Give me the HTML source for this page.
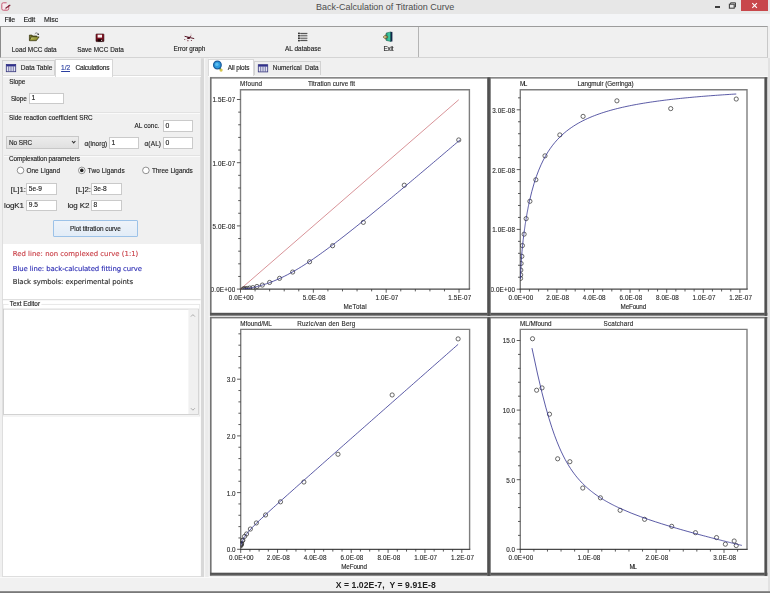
<!DOCTYPE html>
<html lang="en"><head><meta charset="utf-8"><title>Back-Calculation of Titration Curve</title>
<style>
html,body{margin:0;padding:0}
body{width:770px;height:593px;overflow:hidden;background:#f0f0f0;position:relative;font-family:"Liberation Sans",sans-serif}
#app div{position:absolute;box-sizing:border-box}
#app svg{position:absolute;left:0;top:0}
#app{position:absolute;left:0;top:0;width:770px;height:593px;filter:blur(0.42px)}
.t{position:absolute;white-space:pre;line-height:10px;-webkit-text-stroke:0.13px currentColor}
</style></head>
<body><div id="app">
<div style="left:0.00px;top:0.00px;width:770.00px;height:13.50px;background:#e7e7e7"></div>
<svg width="14" height="14" viewBox="0 0 14 14"><rect x="1.8" y="2.8" width="6.9" height="7.4" rx="1.5" fill="#f7eaee" stroke="#c65872" stroke-width="1"/><rect x="6.6" y="1.8" width="3.2" height="3.2" fill="#e7e7e7"/><path d="M10.3 5 L5.7 8.3" stroke="#7c2236" stroke-width="1.2"/><path d="M4.9 9 L6 8.6" stroke="#c65872" stroke-width="0.8"/></svg>
<span class="t" style='left:316.00px;top:1.78px;font-size:9px;color:#4c4c4c;letter-spacing:-0.011px;-webkit-text-stroke:0;'>Back-Calculation of Titration Curve</span>
<div style="left:714.70px;top:6.40px;width:5.20px;height:1.30px;background:#3c3c3c"></div>
<svg width="770" height="14" viewBox="0 0 770 14"><path d="M730.6 4.1 V2.8 H735.5 V7 H734.2" fill="none" stroke="#444" stroke-width="1"/><rect x="729.4" y="4.2" width="4.8" height="4" fill="#e7e7e7" stroke="#444" stroke-width="1.1"/></svg>
<div style="left:741.30px;top:0.00px;width:26.60px;height:10.70px;background:#c8474b"></div>
<svg width="770" height="14" viewBox="0 0 770 14"><path d="M752.3 3.2 L756.9 7.8 M756.9 3.2 L752.3 7.8" stroke="#fff" stroke-width="1.1"/></svg>
<div style="left:0.00px;top:13.50px;width:770.00px;height:12.30px;background:#f4f5f7"></div>
<span class="t" style='left:4.40px;top:14.97px;font-size:7px;color:#1a1a1a;letter-spacing:-0.194px;'>File</span>
<span class="t" style='left:23.50px;top:14.97px;font-size:7px;color:#1a1a1a;letter-spacing:-0.154px;'>Edit</span>
<span class="t" style='left:44.00px;top:14.97px;font-size:7px;color:#1a1a1a;letter-spacing:-0.064px;'>Misc</span>
<div style="left:0.30px;top:25.70px;width:768.00px;height:32.40px;background:#f0f0f0;border-top:1px solid #9c9c9c;border-left:1.2px solid #8a8a8a;border-bottom:1px solid #d4d4d4;border-right:1px solid #c8c8c8"></div>
<div style="left:417.60px;top:26.50px;width:1.00px;height:30.50px;background:#b4b4b4"></div>
<span class="t" style='left:11.80px;top:45.18px;font-size:6.4px;color:#222;letter-spacing:0.003px;'>Load MCC data</span>
<span class="t" style='left:77.20px;top:45.18px;font-size:6.4px;color:#222;letter-spacing:0.036px;'>Save MCC Data</span>
<span class="t" style='left:173.60px;top:44.18px;font-size:6.4px;color:#222;letter-spacing:-0.053px;'>Error graph</span>
<span class="t" style='left:285.00px;top:44.18px;font-size:6.4px;color:#222;letter-spacing:0.044px;'>AL database</span>
<span class="t" style='left:383.60px;top:44.18px;font-size:6.4px;color:#222;letter-spacing:-0.252px;'>Exit</span>
<svg width="770" height="60" viewBox="0 0 770 60"><defs>
<linearGradient id="fg" x1="0" y1="0" x2="1" y2="1"><stop offset="0" stop-color="#e4eaa0"/><stop offset="0.45" stop-color="#a4a440"/><stop offset="1" stop-color="#6e6c26"/></linearGradient>
<linearGradient id="sg" x1="0" y1="0" x2="0" y2="1"><stop offset="0" stop-color="#8c1626"/><stop offset="0.6" stop-color="#7a1020"/><stop offset="1" stop-color="#3a060c"/></linearGradient>
<linearGradient id="dg" x1="0" y1="0" x2="1" y2="0"><stop offset="0" stop-color="#1a9470"/><stop offset="0.6" stop-color="#44cfa6"/><stop offset="1" stop-color="#1e9c7c"/></linearGradient>
</defs>
<!-- open folder -->
<path d="M29.4 40.4 V35.1 H32 L32.8 36 H36.8 V37.2" fill="#77752a" stroke="#35340f" stroke-width="0.7"/>
<path d="M29.4 40.7 L31.2 36.9 H39.1 L36.3 40.7 Z" fill="url(#fg)" stroke="#35340f" stroke-width="0.7"/>
<path d="M34.8 33.9 C35.8 32.6 37.4 32.6 38.1 33.9" fill="none" stroke="#444" stroke-width="0.7"/>
<path d="M37 34.9 H38.9 V33.2 Z" fill="#222"/>
<!-- save -->
<rect x="96" y="34" width="7.9" height="7.6" rx="0.5" fill="url(#sg)" stroke="#2c0408" stroke-width="0.6"/>
<rect x="97.6" y="34.7" width="4.4" height="2.9" fill="#fbf4f4"/>
<rect x="97.8" y="39.2" width="4.2" height="2.2" fill="#1a0204"/>
<rect x="101.2" y="39.8" width="0.9" height="1.2" fill="#e8e0e0"/>
<!-- error graph -->
<path d="M184.6 36.3 L194.2 38.6" stroke="#5a1a2a" stroke-width="1" fill="none"/>
<path d="M186.8 39.2 L191.4 35.6" stroke="#8a3a4a" stroke-width="0.6" fill="none"/>
<ellipse cx="188.6" cy="38" rx="1.5" ry="1" fill="#4a0e1e"/>
<g fill="#6a2636"><circle cx="184.8" cy="39.5" r="0.55"/><circle cx="187.9" cy="40.7" r="0.6"/><circle cx="191.4" cy="40.5" r="0.6"/><circle cx="190.6" cy="36.2" r="0.5"/></g>
<circle cx="191" cy="33.9" r="0.5" fill="#c8a8b0"/>
<!-- list -->
<g stroke="#3c3c3c" stroke-width="0.95"><path d="M300.2 33.4 H307.4 M300.2 35.8 H307.4 M300.2 38.2 H307.4 M300.2 40.6 H307.4"/></g>
<g stroke="#c4c4c4" stroke-width="0.7"><path d="M300.6 34.6 H307 M300.6 37 H307 M300.6 39.4 H307"/></g>
<g fill="#222"><rect x="298.1" y="32.6" width="1.7" height="1.6"/><rect x="298.1" y="35" width="1.7" height="1.6"/><rect x="298.1" y="37.4" width="1.7" height="1.6"/><rect x="298.1" y="39.8" width="1.7" height="1.6"/></g>
<!-- exit -->
<path d="M386.2 33 L391 31.9 V41.5 L386.2 40.4 Z" fill="url(#dg)" stroke="#0c5040" stroke-width="0.5"/>
<rect x="390.6" y="31.9" width="1.8" height="9.6" fill="#13284a"/>
<path d="M383.1 37 L385.7 34.8 V36.2 H387.6 V37.8 H385.7 V39.2 Z" fill="#e6d68c" stroke="#4a3014" stroke-width="0.6"/>
</svg>
<div style="left:1.60px;top:75.00px;width:200.40px;height:502.40px;background:#fff;border:1px solid #dedede"></div>
<div style="left:2.80px;top:76.60px;width:198.00px;height:167.00px;background:#f0f0f0;border-right:1px solid #e0e0e0"></div>
<div style="left:1.80px;top:60.00px;width:53.40px;height:15.40px;background:#efefef;border:1px solid #d2d2d2;border-bottom:none"></div>
<div style="left:55.00px;top:58.60px;width:58.20px;height:18.00px;background:#fff;border:1px solid #d6d6d6;border-bottom:none"></div>
<svg width="120" height="80" viewBox="0 0 120 80">
<rect x="6.3" y="64.5" width="9.4" height="7.2" fill="#e4e6f0" stroke="#34347c" stroke-width="0.8"/>
<rect x="6.3" y="64.5" width="9.4" height="1.9" fill="#30308c"/>
<path d="M8.7 66.2 V71.5 M11 66.2 V71.5 M13.3 66.2 V71.5" stroke="#44448c" stroke-width="0.7"/>
</svg>
<span class="t" style='left:20.80px;top:63.31px;font-size:6.6px;color:#222;letter-spacing:0.022px;'>Data Table</span>
<span class="t" style='left:61.10px;top:62.71px;font-size:6.6px;color:#2a3ea0;letter-spacing:-0.086px;text-decoration:underline;'>1/2</span>
<span class="t" style='left:75.50px;top:62.71px;font-size:6.6px;color:#222;letter-spacing:-0.175px;'>Calculations</span>
<span class="t" style='left:9.30px;top:76.78px;font-size:6.4px;color:#222;letter-spacing:-0.090px;'>Slope</span>
<span class="t" style='left:11.00px;top:93.78px;font-size:6.4px;color:#222;letter-spacing:-0.165px;'>Slope</span>
<div style="left:29.00px;top:92.50px;width:35.00px;height:11.90px;background:#fff;border:1px solid #cacaca"></div>
<span class="t" style='left:31.40px;top:93.19px;font-size:6.8px;color:#222;'>1</span>
<div style="left:3.80px;top:112.00px;width:196.00px;height:1.00px;background:#e2e2e2"></div>
<div style="left:3.80px;top:113.00px;width:196.00px;height:1.00px;background:#fafafa"></div>
<span class="t" style='left:9.00px;top:112.88px;font-size:6.4px;color:#222;letter-spacing:0.024px;'>Side reaction coefficient SRC</span>
<span class="t" style='left:134.40px;top:121.48px;font-size:6.4px;color:#222;letter-spacing:0.066px;'>AL conc.</span>
<div style="left:163.00px;top:120.40px;width:29.80px;height:12.00px;background:#fff;border:1px solid #cacaca"></div>
<span class="t" style='left:165.40px;top:121.14px;font-size:6.8px;color:#222;'>0</span>
<div style="left:6.00px;top:136.40px;width:72.50px;height:12.20px;background:linear-gradient(#ececec,#e0e0e0);border:1px solid #c8c8c8"></div>
<span class="t" style='left:9.00px;top:138.18px;font-size:6.4px;color:#222;letter-spacing:-0.051px;'>No SRC</span>
<svg width="100" height="160" viewBox="0 0 100 160"><path d="M72 141 L73.7 142.9 L75.4 141" fill="none" stroke="#333" stroke-width="1.1"/></svg>
<span class="t" style='left:84.50px;top:138.78px;font-size:6.4px;color:#222;letter-spacing:0.075px;'>α(inorg)</span>
<div style="left:109.00px;top:137.20px;width:29.50px;height:12.20px;background:#fff;border:1px solid #cacaca"></div>
<span class="t" style='left:111.40px;top:138.04px;font-size:6.8px;color:#222;'>1</span>
<span class="t" style='left:144.50px;top:138.78px;font-size:6.4px;color:#222;letter-spacing:0.180px;'>α(AL)</span>
<div style="left:163.00px;top:137.20px;width:29.80px;height:12.20px;background:#fff;border:1px solid #cacaca"></div>
<span class="t" style='left:165.40px;top:138.04px;font-size:6.8px;color:#222;'>0</span>
<div style="left:3.80px;top:154.60px;width:196.00px;height:1.00px;background:#e2e2e2"></div>
<div style="left:3.80px;top:155.60px;width:196.00px;height:1.00px;background:#fafafa"></div>
<span class="t" style='left:9.00px;top:154.08px;font-size:6.4px;color:#222;letter-spacing:-0.099px;'>Complexation parameters</span>
<svg width="210" height="200" viewBox="0 0 210 200"><circle cx="20.5" cy="170.4" r="3.3" fill="#fff" stroke="#6e6e6e" stroke-width="0.75"/></svg>
<svg width="210" height="200" viewBox="0 0 210 200"><circle cx="81.8" cy="170.4" r="3.3" fill="#fff" stroke="#6e6e6e" stroke-width="0.75"/><circle cx="81.8" cy="170.4" r="1.8" fill="#222"/></svg>
<svg width="210" height="200" viewBox="0 0 210 200"><circle cx="145.9" cy="170.4" r="3.3" fill="#fff" stroke="#6e6e6e" stroke-width="0.75"/></svg>
<span class="t" style='left:26.50px;top:165.58px;font-size:6.4px;color:#222;letter-spacing:0.050px;'>One Ligand</span>
<span class="t" style='left:87.80px;top:165.58px;font-size:6.4px;color:#222;letter-spacing:0.091px;'>Two Ligands</span>
<span class="t" style='left:151.90px;top:165.58px;font-size:6.4px;color:#222;letter-spacing:0.003px;'>Three Ligands</span>
<span class="t" style='left:10.80px;top:185.30px;font-size:7.8px;color:#222;letter-spacing:0.007px;'>[L]1:</span>
<div style="left:26.40px;top:182.80px;width:30.40px;height:12.00px;background:#fff;border:1px solid #cacaca"></div>
<span class="t" style='left:28.80px;top:183.61px;font-size:6.6px;color:#222;'>5e-9</span>
<span class="t" style='left:75.80px;top:185.30px;font-size:7.8px;color:#222;letter-spacing:0.007px;'>[L]2:</span>
<div style="left:91.20px;top:182.80px;width:30.40px;height:12.00px;background:#fff;border:1px solid #cacaca"></div>
<span class="t" style='left:93.60px;top:183.61px;font-size:6.6px;color:#222;'>3e-8</span>
<span class="t" style='left:4.10px;top:201.03px;font-size:8.0px;color:#222;letter-spacing:-0.142px;'>logK1</span>
<div style="left:26.40px;top:199.60px;width:30.40px;height:11.60px;background:#fff;border:1px solid #cacaca"></div>
<span class="t" style='left:28.80px;top:200.21px;font-size:6.6px;color:#222;'>9.5</span>
<span class="t" style='left:67.40px;top:201.03px;font-size:8.0px;color:#222;letter-spacing:-0.138px;'>log K2</span>
<div style="left:91.20px;top:199.60px;width:30.40px;height:11.60px;background:#fff;border:1px solid #cacaca"></div>
<span class="t" style='left:93.60px;top:200.21px;font-size:6.6px;color:#222;'>8</span>
<div style="left:52.80px;top:220.40px;width:85.60px;height:16.40px;background:linear-gradient(#eef3f9,#e2ecf7);border:1px solid #9cc2e8;border-radius:1px"></div>
<span class="t" style='left:70.00px;top:224.18px;font-size:6.4px;color:#222;letter-spacing:-0.019px;'>Plot titration curve</span>
<div style="left:2.80px;top:243.60px;width:198.00px;height:56.00px;background:#fff"></div>
<span class="t" style='left:12.80px;top:249.31px;font-size:6.9px;color:#c83c44;font-family:"DejaVu Sans", "Liberation Sans", sans-serif;letter-spacing:0.011px;'>Red line: non complexed curve (1:1)</span>
<span class="t" style='left:12.80px;top:264.11px;font-size:6.9px;color:#2c2cb4;font-family:"DejaVu Sans", "Liberation Sans", sans-serif;letter-spacing:-0.094px;'>Blue line: back-calculated fitting curve</span>
<span class="t" style='left:12.80px;top:277.21px;font-size:6.9px;color:#2a2a2a;font-family:"DejaVu Sans", "Liberation Sans", sans-serif;letter-spacing:-0.082px;'>Black symbols: experimental points</span>
<svg width="215" height="593" viewBox="0 0 215 593"><rect x="2.60" y="299.20" width="198.00" height="1.00" fill="#d6d6d6"/><rect x="3.1" y="304.4" width="196.6" height="111.6" fill="none" stroke="#e6e6e6" stroke-width="0.9"/><rect x="8.60" y="303.00" width="32.80" height="3.00" fill="#fff"/><rect x="3.5" y="309.1" width="194.9" height="105.4" fill="#fff" stroke="#cecece" stroke-width="0.9"/><rect x="188.40" y="309.60" width="9.60" height="104.40" fill="#f0f0f0"/><path d="M190.9 316.6 L192.9 314.6 L194.9 316.6 M190.9 408.2 L192.9 410.2 L194.9 408.2" fill="none" stroke="#a4a4a4" stroke-width="0.9"/><rect x="200.90" y="58.40" width="3.10" height="518.80" fill="#d8d8d8"/><rect x="204.00" y="58.40" width="1.30" height="518.80" fill="#f6f6f6"/><rect x="205.30" y="58.40" width="3.50" height="518.80" fill="#ebebeb"/><rect x="208.80" y="58.40" width="1.30" height="518.80" fill="#f8f8f8"/></svg>
<span class="t" style='left:9.70px;top:299.18px;font-size:6.4px;color:#222;letter-spacing:0.020px;'>Text Editor</span>
<div style="left:254.00px;top:60.60px;width:66.60px;height:14.60px;background:#efefef;border:1px solid #d2d2d2;border-bottom:none"></div>
<div style="left:208.20px;top:58.80px;width:46.00px;height:18.00px;background:#fff;border:1px solid #dadada;border-bottom:none"></div>
<div style="left:208.20px;top:75.60px;width:561.00px;height:1.20px;background:#fafafa"></div>
<svg width="330" height="80" viewBox="0 0 330 80">
<circle cx="221.1" cy="70.1" r="1.6" fill="#d6c64e"/>
<circle cx="219.9" cy="68.6" r="1" fill="#3a7a4a"/>
<circle cx="217.4" cy="65" r="3.8" fill="#2c9ce0" stroke="#1c5c9c" stroke-width="1.3"/>
<circle cx="216.9" cy="64.4" r="1.7" fill="#5cbcf0"/>
<rect x="258.3" y="64.7" width="9.4" height="7.2" fill="#e4e6f0" stroke="#34347c" stroke-width="0.8"/>
<rect x="258.3" y="64.7" width="9.4" height="1.9" fill="#30308c"/>
<path d="M260.7 66.4 V71.7 M263 66.4 V71.7 M265.3 66.4 V71.7" stroke="#44448c" stroke-width="0.7"/>
</svg>
<span class="t" style='left:227.70px;top:62.58px;font-size:6.4px;color:#222;letter-spacing:-0.074px;'>All plots</span>
<span class="t" style='left:272.80px;top:63.38px;font-size:6.4px;color:#222;letter-spacing:-0.002px;'>Numerical  Data</span>
<svg width="770" height="593" viewBox="0 0 770 593"><defs><linearGradient id="gh" x1="0" y1="0" x2="0" y2="1"><stop offset="0" stop-color="#4c4c4c"/><stop offset="0.55" stop-color="#5a5a5a"/><stop offset="1" stop-color="#8e8e8e"/></linearGradient><linearGradient id="gv" x1="0" y1="0" x2="1" y2="0"><stop offset="0" stop-color="#6c6c6c"/><stop offset="0.3" stop-color="#4e4e4e"/><stop offset="0.8" stop-color="#585858"/><stop offset="1" stop-color="#808080"/></linearGradient></defs>
<rect x="210.10" y="77.30" width="557.30" height="498.60" fill="#fff"/>
<rect x="210.10" y="315.90" width="557.30" height="1.00" fill="#ececec"/>
<rect x="210.10" y="77.10" width="557.30" height="1.50" fill="#7a7a7a"/>
<rect x="210.10" y="316.90" width="557.30" height="1.50" fill="#787878"/>
<rect x="209.90" y="77.30" width="1.70" height="238.60" fill="#747474"/>
<rect x="209.90" y="316.90" width="1.70" height="259.00" fill="#747474"/>
<rect x="210.10" y="312.80" width="557.30" height="3.10" fill="url(#gh)"/>
<rect x="210.10" y="572.70" width="557.30" height="3.20" fill="url(#gh)"/>
<rect x="487.10" y="77.30" width="3.70" height="238.60" fill="url(#gv)"/>
<rect x="487.10" y="317.20" width="3.70" height="258.70" fill="url(#gv)"/>
<rect x="764.30" y="77.30" width="3.10" height="238.60" fill="url(#gv)"/>
<rect x="764.30" y="317.20" width="3.10" height="258.70" fill="url(#gv)"/>
</svg>
<svg width="770" height="593" viewBox="0 0 770 593">
<path d="M240.50 289.10 V89.70 H469.40 V289.10" fill="none" stroke="#7e7e7e" stroke-width="1.4"/>
<path d="M239.80 289.10 H470.10" fill="none" stroke="#484848" stroke-width="1.25"/>
<path d="M240.50 289.10v3.6M255.07 289.10v2.3M269.64 289.10v2.3M284.21 289.10v2.3M298.78 289.10v2.3M313.35 289.10v3.6M327.92 289.10v2.3M342.49 289.10v2.3M357.06 289.10v2.3M371.63 289.10v2.3M386.20 289.10v3.6M400.77 289.10v2.3M415.34 289.10v2.3M429.91 289.10v2.3M444.48 289.10v2.3M459.05 289.10v3.6M240.50 289.10h-3.6M240.50 276.46h-2.3M240.50 263.82h-2.3M240.50 251.18h-2.3M240.50 238.54h-2.3M240.50 225.90h-3.6M240.50 213.26h-2.3M240.50 200.62h-2.3M240.50 187.98h-2.3M240.50 175.34h-2.3M240.50 162.70h-3.6M240.50 150.06h-2.3M240.50 137.42h-2.3M240.50 124.78h-2.3M240.50 112.14h-2.3M240.50 99.50h-3.6" fill="none" stroke="#333" stroke-width="0.8"/>
<path d="M240.50 289.10 L458.76 99.75" stroke="#c25860" stroke-width="0.65" fill="none"/>
<clipPath id="cp1"><rect x="240.30" y="89.70" width="229.10" height="199.60"/></clipPath><g clip-path="url(#cp1)">
<circle cx="243.30" cy="288.95" r="2.1" fill="none" stroke="#303030" stroke-width="0.72"/>
<circle cx="244.30" cy="288.83" r="2.1" fill="none" stroke="#303030" stroke-width="0.72"/>
<circle cx="245.56" cy="288.75" r="2.1" fill="none" stroke="#303030" stroke-width="0.72"/>
<circle cx="247.41" cy="288.54" r="2.1" fill="none" stroke="#303030" stroke-width="0.72"/>
<circle cx="249.75" cy="288.03" r="2.1" fill="none" stroke="#303030" stroke-width="0.72"/>
<circle cx="252.83" cy="287.63" r="2.1" fill="none" stroke="#303030" stroke-width="0.72"/>
<circle cx="256.95" cy="286.46" r="2.1" fill="none" stroke="#303030" stroke-width="0.72"/>
<circle cx="262.34" cy="285.07" r="2.1" fill="none" stroke="#303030" stroke-width="0.72"/>
<circle cx="269.57" cy="282.46" r="2.1" fill="none" stroke="#303030" stroke-width="0.72"/>
<circle cx="279.55" cy="278.36" r="2.1" fill="none" stroke="#303030" stroke-width="0.72"/>
<circle cx="292.66" cy="272.04" r="2.1" fill="none" stroke="#303030" stroke-width="0.72"/>
<circle cx="309.56" cy="261.80" r="2.1" fill="none" stroke="#303030" stroke-width="0.72"/>
<circle cx="332.58" cy="245.74" r="2.1" fill="none" stroke="#303030" stroke-width="0.72"/>
<circle cx="363.33" cy="222.36" r="2.1" fill="none" stroke="#303030" stroke-width="0.72"/>
<circle cx="404.27" cy="185.20" r="2.1" fill="none" stroke="#303030" stroke-width="0.72"/>
<circle cx="458.76" cy="139.95" r="2.1" fill="none" stroke="#303030" stroke-width="0.72"/>
<path d="M243.18 288.95 L244.50 288.85 L245.57 288.74 L246.50 288.64 L247.32 288.53 L248.06 288.43 L248.74 288.32 L249.38 288.22 L249.99 288.11 L250.57 288.01 L251.12 287.90 L251.65 287.80 L252.16 287.69 L252.66 287.59 L253.15 287.49 L253.62 287.38 L254.09 287.28 L254.54 287.17 L254.99 287.07 L255.42 286.96 L255.85 286.86 L256.27 286.75 L256.69 286.65 L257.10 286.54 L257.50 286.44 L257.90 286.34 L258.29 286.23 L258.67 286.13 L259.06 286.02 L259.43 285.92 L259.81 285.81 L260.18 285.71 L260.54 285.60 L260.90 285.50 L261.26 285.39 L261.61 285.29 L261.96 285.19 L262.31 285.08 L262.65 284.98 L262.99 284.87 L263.32 284.77 L263.66 284.66 L263.99 284.56 L264.31 284.45 L264.64 284.35 L264.96 284.24 L265.28 284.14 L265.60 284.03 L265.91 283.93 L266.22 283.83 L266.53 283.72 L266.84 283.62 L267.14 283.51 L267.44 283.41 L267.74 283.30 L268.04 283.20 L268.33 283.09 L268.63 282.99 L268.92 282.88 L269.21 282.78 L273.41 281.18 L277.27 279.57 L280.84 277.97 L284.19 276.36 L287.36 274.76 L290.38 273.15 L293.27 271.55 L296.06 269.94 L298.75 268.34 L301.37 266.73 L303.92 265.13 L306.41 263.52 L308.85 261.92 L311.24 260.31 L313.60 258.71 L315.91 257.10 L318.19 255.50 L320.45 253.89 L322.68 252.29 L324.88 250.68 L327.06 249.08 L329.23 247.47 L331.37 245.87 L333.50 244.26 L335.61 242.66 L337.71 241.05 L339.80 239.45 L341.87 237.84 L343.94 236.24 L345.99 234.63 L348.03 233.03 L350.07 231.42 L352.10 229.82 L354.11 228.21 L356.13 226.61 L358.13 225.01 L360.13 223.40 L362.12 221.80 L364.11 220.19 L366.09 218.59 L368.07 216.98 L370.04 215.38 L372.01 213.77 L373.97 212.17 L375.93 210.56 L377.88 208.96 L379.84 207.35 L381.78 205.75 L383.73 204.14 L385.67 202.54 L387.61 200.93 L389.55 199.33 L391.48 197.72 L393.41 196.12 L395.34 194.51 L397.27 192.91 L399.19 191.30 L401.11 189.70 L403.03 188.09 L404.95 186.49 L406.87 184.88 L408.78 183.28 L410.70 181.67 L412.61 180.07 L414.52 178.46 L416.42 176.86 L418.33 175.25 L420.23 173.65 L422.14 172.05 L424.04 170.44 L425.94 168.84 L427.84 167.23 L429.74 165.63 L431.64 164.02 L433.53 162.42 L435.43 160.81 L437.32 159.21 L439.22 157.60 L441.11 156.00 L443.00 154.39 L444.89 152.79 L446.78 151.18 L448.67 149.58 L450.56 147.97 L452.45 146.37 L454.33 144.76 L456.22 143.16 L458.10 141.55 L459.99 139.95" fill="none" stroke="#2c2c8c" stroke-width="0.78"/>
</g></svg>
<span class="t" style='left:240.10px;top:79.12px;font-size:6.3px;color:#2c2c2c;letter-spacing:0.197px;'>Mfound</span>
<span class="t" style='left:307.90px;top:79.12px;font-size:6.3px;color:#2c2c2c;letter-spacing:0.049px;'>Titration curve fit</span>
<span class="t" style='left:343.40px;top:301.52px;font-size:6.3px;color:#2c2c2c;letter-spacing:0.206px;'>MeTotal</span>
<span class="t" style='left:228.80px;top:293.12px;font-size:6.3px;color:#2c2c2c;letter-spacing:0.160px;'>0.0E+00</span>
<span class="t" style='left:302.65px;top:293.12px;font-size:6.3px;color:#2c2c2c;letter-spacing:0.123px;'>5.0E-08</span>
<span class="t" style='left:375.50px;top:293.12px;font-size:6.3px;color:#2c2c2c;letter-spacing:0.123px;'>1.0E-07</span>
<span class="t" style='left:448.35px;top:293.12px;font-size:6.3px;color:#2c2c2c;letter-spacing:0.123px;'>1.5E-07</span>
<span class="t" style='left:210.60px;top:285.02px;font-size:6.3px;color:#2c2c2c;letter-spacing:0.160px;clip-path:inset(0 0 0 0.80px);'>0.0E+00</span>
<span class="t" style='left:212.40px;top:221.82px;font-size:6.3px;color:#2c2c2c;letter-spacing:0.123px;'>5.0E-08</span>
<span class="t" style='left:212.40px;top:158.62px;font-size:6.3px;color:#2c2c2c;letter-spacing:0.123px;'>1.0E-07</span>
<span class="t" style='left:212.40px;top:95.42px;font-size:6.3px;color:#2c2c2c;letter-spacing:0.123px;'>1.5E-07</span>
<svg width="770" height="593" viewBox="0 0 770 593">
<path d="M520.30 289.20 V89.70 H747.00 V289.20" fill="none" stroke="#7e7e7e" stroke-width="1.4"/>
<path d="M519.60 289.20 H747.70" fill="none" stroke="#484848" stroke-width="1.25"/>
<path d="M520.30 289.20v3.6M529.45 289.20v2.3M538.60 289.20v2.3M547.75 289.20v2.3M556.90 289.20v3.6M566.05 289.20v2.3M575.20 289.20v2.3M584.35 289.20v2.3M593.50 289.20v3.6M602.65 289.20v2.3M611.80 289.20v2.3M620.95 289.20v2.3M630.10 289.20v3.6M639.25 289.20v2.3M648.40 289.20v2.3M657.55 289.20v2.3M666.70 289.20v3.6M675.85 289.20v2.3M685.00 289.20v2.3M694.15 289.20v2.3M703.30 289.20v3.6M712.45 289.20v2.3M721.60 289.20v2.3M730.75 289.20v2.3M739.90 289.20v3.6M520.30 289.20h-3.6M520.30 277.24h-2.3M520.30 265.28h-2.3M520.30 253.32h-2.3M520.30 241.36h-2.3M520.30 229.40h-3.6M520.30 217.44h-2.3M520.30 205.48h-2.3M520.30 193.52h-2.3M520.30 181.56h-2.3M520.30 169.60h-3.6M520.30 157.64h-2.3M520.30 145.68h-2.3M520.30 133.72h-2.3M520.30 121.76h-2.3M520.30 109.80h-3.6M520.30 97.84h-2.3" fill="none" stroke="#333" stroke-width="0.8"/>

<clipPath id="cp2"><rect x="520.10" y="89.70" width="226.90" height="199.70"/></clipPath><g clip-path="url(#cp2)">
<circle cx="520.52" cy="278.44" r="2.1" fill="none" stroke="#303030" stroke-width="0.72"/>
<circle cx="520.68" cy="274.85" r="2.1" fill="none" stroke="#303030" stroke-width="0.72"/>
<circle cx="520.81" cy="270.06" r="2.1" fill="none" stroke="#303030" stroke-width="0.72"/>
<circle cx="521.11" cy="263.49" r="2.1" fill="none" stroke="#303030" stroke-width="0.72"/>
<circle cx="521.85" cy="256.31" r="2.1" fill="none" stroke="#303030" stroke-width="0.72"/>
<circle cx="522.42" cy="245.55" r="2.1" fill="none" stroke="#303030" stroke-width="0.72"/>
<circle cx="524.12" cy="234.18" r="2.1" fill="none" stroke="#303030" stroke-width="0.72"/>
<circle cx="526.14" cy="218.64" r="2.1" fill="none" stroke="#303030" stroke-width="0.72"/>
<circle cx="529.91" cy="201.29" r="2.1" fill="none" stroke="#303030" stroke-width="0.72"/>
<circle cx="535.85" cy="179.77" r="2.1" fill="none" stroke="#303030" stroke-width="0.72"/>
<circle cx="545.00" cy="155.85" r="2.1" fill="none" stroke="#303030" stroke-width="0.72"/>
<circle cx="559.83" cy="134.92" r="2.1" fill="none" stroke="#303030" stroke-width="0.72"/>
<circle cx="583.07" cy="116.38" r="2.1" fill="none" stroke="#303030" stroke-width="0.72"/>
<circle cx="616.92" cy="100.83" r="2.1" fill="none" stroke="#303030" stroke-width="0.72"/>
<circle cx="670.73" cy="108.60" r="2.1" fill="none" stroke="#303030" stroke-width="0.72"/>
<circle cx="736.24" cy="99.04" r="2.1" fill="none" stroke="#303030" stroke-width="0.72"/>
<path d="M520.52 278.91 L520.67 274.01 L520.82 270.08 L520.97 266.78 L521.12 263.92 L521.27 261.37 L521.43 259.05 L521.58 256.91 L521.73 254.93 L521.88 253.05 L522.03 251.28 L522.18 249.59 L522.33 247.97 L522.49 246.42 L522.64 244.92 L522.79 243.46 L522.94 242.06 L523.09 240.69 L523.24 239.36 L523.39 238.06 L523.55 236.80 L523.70 235.56 L523.85 234.36 L524.00 233.17 L524.15 232.02 L524.30 230.88 L524.45 229.77 L524.61 228.67 L524.76 227.60 L524.91 226.55 L525.06 225.51 L525.21 224.49 L525.36 223.49 L525.51 222.51 L525.67 221.54 L525.82 220.58 L525.97 219.65 L526.12 218.72 L526.27 217.81 L526.42 216.91 L526.57 216.03 L526.72 215.15 L526.88 214.29 L527.03 213.44 L527.18 212.61 L527.33 211.78 L527.48 210.97 L527.63 210.16 L527.78 209.37 L527.94 208.59 L528.09 207.81 L528.24 207.05 L528.39 206.30 L528.54 205.55 L528.69 204.82 L528.84 204.09 L529.00 203.38 L529.15 202.67 L529.30 201.97 L529.45 201.28 L531.77 191.60 L534.10 183.39 L536.42 176.32 L538.74 170.16 L541.07 164.75 L543.39 159.95 L545.71 155.67 L548.04 151.82 L550.36 148.35 L552.68 145.20 L555.01 142.32 L557.33 139.69 L559.66 137.28 L561.98 135.05 L564.30 132.98 L566.63 131.07 L568.95 129.29 L571.27 127.63 L573.60 126.08 L575.92 124.62 L578.24 123.26 L580.57 121.97 L582.89 120.76 L585.21 119.62 L587.54 118.54 L589.86 117.51 L592.18 116.54 L594.51 115.62 L596.83 114.74 L599.15 113.91 L601.48 113.11 L603.80 112.36 L606.12 111.63 L608.45 110.94 L610.77 110.27 L613.10 109.64 L615.42 109.03 L617.74 108.44 L620.07 107.88 L622.39 107.34 L624.71 106.82 L627.04 106.32 L629.36 105.84 L631.68 105.37 L634.01 104.92 L636.33 104.49 L638.65 104.07 L640.98 103.67 L643.30 103.27 L645.62 102.90 L647.95 102.53 L650.27 102.17 L652.59 101.83 L654.92 101.50 L657.24 101.17 L659.57 100.86 L661.89 100.55 L664.21 100.26 L666.54 99.97 L668.86 99.69 L671.18 99.42 L673.51 99.15 L675.83 98.90 L678.15 98.65 L680.48 98.40 L682.80 98.16 L685.12 97.93 L687.45 97.71 L689.77 97.49 L692.09 97.27 L694.42 97.06 L696.74 96.86 L699.06 96.66 L701.39 96.46 L703.71 96.27 L706.03 96.08 L708.36 95.90 L710.68 95.72 L713.01 95.55 L715.33 95.38 L717.65 95.21 L719.98 95.05 L722.30 94.89 L724.62 94.73 L726.95 94.58 L729.27 94.43 L731.59 94.28 L733.92 94.14 L736.24 94.00" fill="none" stroke="#2c2c8c" stroke-width="0.78"/>
</g></svg>
<span class="t" style='left:519.90px;top:79.12px;font-size:6.3px;color:#2c2c2c;letter-spacing:-1.350px;'>ML</span>
<span class="t" style='left:577.50px;top:79.12px;font-size:6.3px;color:#2c2c2c;letter-spacing:-0.039px;'>Langmuir (Gerringa)</span>
<span class="t" style='left:620.60px;top:301.62px;font-size:6.3px;color:#2c2c2c;letter-spacing:-0.168px;'>MeFound</span>
<span class="t" style='left:508.60px;top:293.22px;font-size:6.3px;color:#2c2c2c;letter-spacing:0.160px;'>0.0E+00</span>
<span class="t" style='left:546.20px;top:293.22px;font-size:6.3px;color:#2c2c2c;letter-spacing:0.123px;'>2.0E-08</span>
<span class="t" style='left:582.80px;top:293.22px;font-size:6.3px;color:#2c2c2c;letter-spacing:0.123px;'>4.0E-08</span>
<span class="t" style='left:619.40px;top:293.22px;font-size:6.3px;color:#2c2c2c;letter-spacing:0.123px;'>6.0E-08</span>
<span class="t" style='left:656.00px;top:293.22px;font-size:6.3px;color:#2c2c2c;letter-spacing:0.123px;'>8.0E-08</span>
<span class="t" style='left:692.60px;top:293.22px;font-size:6.3px;color:#2c2c2c;letter-spacing:0.123px;'>1.0E-07</span>
<span class="t" style='left:729.20px;top:293.22px;font-size:6.3px;color:#2c2c2c;letter-spacing:0.123px;'>1.2E-07</span>
<span class="t" style='left:490.40px;top:285.12px;font-size:6.3px;color:#2c2c2c;letter-spacing:0.160px;clip-path:inset(0 0 0 0.80px);'>0.0E+00</span>
<span class="t" style='left:492.20px;top:225.32px;font-size:6.3px;color:#2c2c2c;letter-spacing:0.123px;'>1.0E-08</span>
<span class="t" style='left:492.20px;top:165.52px;font-size:6.3px;color:#2c2c2c;letter-spacing:0.123px;'>2.0E-08</span>
<span class="t" style='left:492.20px;top:105.72px;font-size:6.3px;color:#2c2c2c;letter-spacing:0.123px;'>3.0E-08</span>
<svg width="770" height="593" viewBox="0 0 770 593">
<path d="M240.70 549.30 V329.40 H469.60 V549.30" fill="none" stroke="#7e7e7e" stroke-width="1.4"/>
<path d="M240.00 549.30 H470.30" fill="none" stroke="#484848" stroke-width="1.25"/>
<path d="M240.70 549.30v3.6M249.91 549.30v2.3M259.12 549.30v2.3M268.34 549.30v2.3M277.55 549.30v3.6M286.76 549.30v2.3M295.98 549.30v2.3M305.19 549.30v2.3M314.40 549.30v3.6M323.61 549.30v2.3M332.82 549.30v2.3M342.04 549.30v2.3M351.25 549.30v3.6M360.46 549.30v2.3M369.68 549.30v2.3M378.89 549.30v2.3M388.10 549.30v3.6M397.31 549.30v2.3M406.52 549.30v2.3M415.74 549.30v2.3M424.95 549.30v3.6M434.16 549.30v2.3M443.38 549.30v2.3M452.59 549.30v2.3M461.80 549.30v3.6M240.70 549.30h-3.6M240.70 537.96h-2.3M240.70 526.62h-2.3M240.70 515.28h-2.3M240.70 503.94h-2.3M240.70 492.60h-3.6M240.70 481.26h-2.3M240.70 469.92h-2.3M240.70 458.58h-2.3M240.70 447.24h-2.3M240.70 435.90h-3.6M240.70 424.56h-2.3M240.70 413.22h-2.3M240.70 401.88h-2.3M240.70 390.54h-2.3M240.70 379.20h-3.6M240.70 367.86h-2.3M240.70 356.52h-2.3M240.70 345.18h-2.3M240.70 333.84h-2.3" fill="none" stroke="#333" stroke-width="0.8"/>

<clipPath id="cp3"><rect x="240.50" y="329.40" width="229.10" height="220.10"/></clipPath><g clip-path="url(#cp3)">
<circle cx="240.92" cy="545.55" r="2.1" fill="none" stroke="#303030" stroke-width="0.72"/>
<circle cx="241.09" cy="544.34" r="2.1" fill="none" stroke="#303030" stroke-width="0.72"/>
<circle cx="241.21" cy="544.41" r="2.1" fill="none" stroke="#303030" stroke-width="0.72"/>
<circle cx="241.52" cy="543.46" r="2.1" fill="none" stroke="#303030" stroke-width="0.72"/>
<circle cx="242.26" cy="540.58" r="2.1" fill="none" stroke="#303030" stroke-width="0.72"/>
<circle cx="242.84" cy="540.29" r="2.1" fill="none" stroke="#303030" stroke-width="0.72"/>
<circle cx="244.55" cy="536.42" r="2.1" fill="none" stroke="#303030" stroke-width="0.72"/>
<circle cx="246.58" cy="533.97" r="2.1" fill="none" stroke="#303030" stroke-width="0.72"/>
<circle cx="250.37" cy="529.05" r="2.1" fill="none" stroke="#303030" stroke-width="0.72"/>
<circle cx="256.36" cy="522.96" r="2.1" fill="none" stroke="#303030" stroke-width="0.72"/>
<circle cx="265.57" cy="514.97" r="2.1" fill="none" stroke="#303030" stroke-width="0.72"/>
<circle cx="280.50" cy="501.83" r="2.1" fill="none" stroke="#303030" stroke-width="0.72"/>
<circle cx="303.90" cy="482.01" r="2.1" fill="none" stroke="#303030" stroke-width="0.72"/>
<circle cx="337.98" cy="454.26" r="2.1" fill="none" stroke="#303030" stroke-width="0.72"/>
<circle cx="392.15" cy="394.97" r="2.1" fill="none" stroke="#303030" stroke-width="0.72"/>
<circle cx="458.12" cy="338.90" r="2.1" fill="none" stroke="#303030" stroke-width="0.72"/>
<path d="M240.92 545.38 L241.07 544.80 L241.22 544.26 L241.38 543.75 L241.53 543.27 L241.68 542.81 L241.83 542.38 L241.99 541.97 L242.14 541.58 L242.29 541.20 L242.44 540.84 L242.60 540.49 L242.75 540.16 L242.90 539.83 L243.05 539.52 L243.21 539.22 L243.36 538.92 L243.51 538.64 L243.66 538.36 L243.82 538.09 L243.97 537.82 L244.12 537.57 L244.27 537.31 L244.43 537.06 L244.58 536.82 L244.73 536.58 L244.88 536.35 L245.03 536.12 L245.19 535.89 L245.34 535.67 L245.49 535.45 L245.64 535.24 L245.80 535.02 L245.95 534.82 L246.10 534.61 L246.25 534.40 L246.41 534.20 L246.56 534.00 L246.71 533.80 L246.86 533.61 L247.02 533.42 L247.17 533.22 L247.32 533.03 L247.47 532.85 L247.63 532.66 L247.78 532.47 L247.93 532.29 L248.08 532.11 L248.24 531.93 L248.39 531.75 L248.54 531.57 L248.69 531.39 L248.85 531.22 L249.00 531.04 L249.15 530.87 L249.30 530.70 L249.46 530.53 L249.61 530.36 L249.76 530.19 L249.91 530.02 L252.25 527.52 L254.59 525.14 L256.93 522.84 L259.27 520.59 L261.61 518.38 L263.95 516.20 L266.29 514.04 L268.63 511.89 L270.97 509.76 L273.31 507.63 L275.65 505.52 L277.98 503.41 L280.32 501.30 L282.66 499.21 L285.00 497.11 L287.34 495.02 L289.68 492.93 L292.02 490.85 L294.36 488.76 L296.70 486.68 L299.04 484.60 L301.38 482.53 L303.72 480.45 L306.06 478.38 L308.40 476.30 L310.74 474.23 L313.08 472.16 L315.41 470.09 L317.75 468.02 L320.09 465.95 L322.43 463.88 L324.77 461.81 L327.11 459.75 L329.45 457.68 L331.79 455.61 L334.13 453.55 L336.47 451.48 L338.81 449.42 L341.15 447.35 L343.49 445.29 L345.83 443.23 L348.17 441.16 L350.50 439.10 L352.84 437.04 L355.18 434.97 L357.52 432.91 L359.86 430.85 L362.20 428.79 L364.54 426.73 L366.88 424.66 L369.22 422.60 L371.56 420.54 L373.90 418.48 L376.24 416.42 L378.58 414.36 L380.92 412.30 L383.26 410.24 L385.60 408.18 L387.93 406.11 L390.27 404.05 L392.61 401.99 L394.95 399.93 L397.29 397.87 L399.63 395.81 L401.97 393.75 L404.31 391.69 L406.65 389.63 L408.99 387.57 L411.33 385.52 L413.67 383.46 L416.01 381.40 L418.35 379.34 L420.69 377.28 L423.02 375.22 L425.36 373.16 L427.70 371.10 L430.04 369.04 L432.38 366.98 L434.72 364.92 L437.06 362.86 L439.40 360.81 L441.74 358.75 L444.08 356.69 L446.42 354.63 L448.76 352.57 L451.10 350.51 L453.44 348.45 L455.78 346.40 L458.12 344.34" fill="none" stroke="#2c2c8c" stroke-width="0.78"/>
</g></svg>
<span class="t" style='left:240.30px;top:318.82px;font-size:6.3px;color:#2c2c2c;'>Mfound/ML</span>
<span class="t" style='left:297.20px;top:318.82px;font-size:6.3px;color:#2c2c2c;letter-spacing:0.190px;'>Ruzic/van den Berg</span>
<span class="t" style='left:341.30px;top:561.72px;font-size:6.3px;color:#2c2c2c;letter-spacing:-0.168px;'>MeFound</span>
<span class="t" style='left:229.00px;top:553.32px;font-size:6.3px;color:#2c2c2c;letter-spacing:0.160px;'>0.0E+00</span>
<span class="t" style='left:266.85px;top:553.32px;font-size:6.3px;color:#2c2c2c;letter-spacing:0.123px;'>2.0E-08</span>
<span class="t" style='left:303.70px;top:553.32px;font-size:6.3px;color:#2c2c2c;letter-spacing:0.123px;'>4.0E-08</span>
<span class="t" style='left:340.55px;top:553.32px;font-size:6.3px;color:#2c2c2c;letter-spacing:0.123px;'>6.0E-08</span>
<span class="t" style='left:377.40px;top:553.32px;font-size:6.3px;color:#2c2c2c;letter-spacing:0.123px;'>8.0E-08</span>
<span class="t" style='left:414.25px;top:553.32px;font-size:6.3px;color:#2c2c2c;letter-spacing:0.123px;'>1.0E-07</span>
<span class="t" style='left:451.10px;top:553.32px;font-size:6.3px;color:#2c2c2c;letter-spacing:0.123px;'>1.2E-07</span>
<span class="t" style='left:226.63px;top:545.22px;font-size:6.3px;color:#2c2c2c;'>0.0</span>
<span class="t" style='left:226.63px;top:488.52px;font-size:6.3px;color:#2c2c2c;'>1.0</span>
<span class="t" style='left:226.63px;top:431.82px;font-size:6.3px;color:#2c2c2c;'>2.0</span>
<span class="t" style='left:226.63px;top:375.12px;font-size:6.3px;color:#2c2c2c;'>3.0</span>
<svg width="770" height="593" viewBox="0 0 770 593">
<path d="M520.30 549.30 V329.40 H747.00 V549.30" fill="none" stroke="#7e7e7e" stroke-width="1.4"/>
<path d="M519.60 549.30 H747.70" fill="none" stroke="#484848" stroke-width="1.25"/>
<path d="M520.30 549.30v3.6M533.88 549.30v2.3M547.46 549.30v2.3M561.04 549.30v2.3M574.62 549.30v2.3M588.20 549.30v3.6M601.78 549.30v2.3M615.36 549.30v2.3M628.94 549.30v2.3M642.52 549.30v2.3M656.10 549.30v3.6M669.68 549.30v2.3M683.26 549.30v2.3M696.84 549.30v2.3M710.42 549.30v2.3M724.00 549.30v3.6M737.58 549.30v2.3M520.30 549.30h-3.6M520.30 535.38h-2.3M520.30 521.46h-2.3M520.30 507.54h-2.3M520.30 493.62h-2.3M520.30 479.70h-3.6M520.30 465.78h-2.3M520.30 451.86h-2.3M520.30 437.94h-2.3M520.30 424.02h-2.3M520.30 410.10h-3.6M520.30 396.18h-2.3M520.30 382.26h-2.3M520.30 368.34h-2.3M520.30 354.42h-2.3M520.30 340.50h-3.6" fill="none" stroke="#333" stroke-width="0.8"/>

<clipPath id="cp4"><rect x="520.10" y="329.40" width="226.90" height="220.10"/></clipPath><g clip-path="url(#cp4)">
<circle cx="532.52" cy="338.75" r="2.1" fill="none" stroke="#303030" stroke-width="0.72"/>
<circle cx="536.60" cy="390.21" r="2.1" fill="none" stroke="#303030" stroke-width="0.72"/>
<circle cx="542.03" cy="387.91" r="2.1" fill="none" stroke="#303030" stroke-width="0.72"/>
<circle cx="549.50" cy="414.18" r="2.1" fill="none" stroke="#303030" stroke-width="0.72"/>
<circle cx="557.64" cy="458.80" r="2.1" fill="none" stroke="#303030" stroke-width="0.72"/>
<circle cx="569.87" cy="461.70" r="2.1" fill="none" stroke="#303030" stroke-width="0.72"/>
<circle cx="582.77" cy="488.03" r="2.1" fill="none" stroke="#303030" stroke-width="0.72"/>
<circle cx="600.42" cy="497.81" r="2.1" fill="none" stroke="#303030" stroke-width="0.72"/>
<circle cx="620.11" cy="510.32" r="2.1" fill="none" stroke="#303030" stroke-width="0.72"/>
<circle cx="644.56" cy="519.33" r="2.1" fill="none" stroke="#303030" stroke-width="0.72"/>
<circle cx="671.72" cy="526.31" r="2.1" fill="none" stroke="#303030" stroke-width="0.72"/>
<circle cx="695.48" cy="532.67" r="2.1" fill="none" stroke="#303030" stroke-width="0.72"/>
<circle cx="716.53" cy="537.57" r="2.1" fill="none" stroke="#303030" stroke-width="0.72"/>
<circle cx="734.18" cy="541.00" r="2.1" fill="none" stroke="#303030" stroke-width="0.72"/>
<circle cx="725.36" cy="544.19" r="2.1" fill="none" stroke="#303030" stroke-width="0.72"/>
<circle cx="736.22" cy="545.55" r="2.1" fill="none" stroke="#303030" stroke-width="0.72"/>
<path d="M531.98 348.11 L537.55 373.99 L542.01 392.83 L545.76 407.18 L549.01 418.49 L551.90 427.66 L554.53 435.25 L556.96 441.65 L559.22 447.12 L561.34 451.87 L563.36 456.02 L565.27 459.70 L567.11 462.98 L568.88 465.92 L570.58 468.59 L572.23 471.02 L573.83 473.23 L575.38 475.27 L576.89 477.16 L578.36 478.90 L579.80 480.53 L581.20 482.04 L582.57 483.46 L583.92 484.79 L585.23 486.05 L586.52 487.23 L587.78 488.35 L589.02 489.42 L590.24 490.42 L591.44 491.38 L592.61 492.30 L593.77 493.17 L594.91 494.01 L596.03 494.81 L597.13 495.58 L598.21 496.32 L599.28 497.03 L600.33 497.71 L601.36 498.37 L602.38 499.00 L603.39 499.61 L604.38 500.21 L605.35 500.78 L606.32 501.33 L607.27 501.87 L608.21 502.39 L609.13 502.90 L610.04 503.39 L610.94 503.87 L611.83 504.33 L612.71 504.78 L613.58 505.22 L614.43 505.65 L615.27 506.07 L616.11 506.47 L616.93 506.87 L617.75 507.26 L618.55 507.64 L619.35 508.01 L620.13 508.37 L631.12 513.06 L640.44 516.63 L648.47 519.47 L655.47 521.81 L661.61 523.77 L667.06 525.46 L671.92 526.92 L676.29 528.20 L680.23 529.34 L683.81 530.36 L687.07 531.27 L690.06 532.10 L692.80 532.86 L695.33 533.54 L697.68 534.18 L699.85 534.76 L701.87 535.30 L703.76 535.80 L705.52 536.26 L707.17 536.70 L708.72 537.10 L710.18 537.48 L711.56 537.84 L712.85 538.17 L714.08 538.49 L715.24 538.79 L716.34 539.07 L717.39 539.34 L718.39 539.59 L719.33 539.83 L720.24 540.06 L721.10 540.28 L721.92 540.49 L722.71 540.69 L723.46 540.88 L724.19 541.06 L724.88 541.23 L725.54 541.40 L726.18 541.56 L726.79 541.71 L727.39 541.86 L727.95 542.00 L728.50 542.14 L729.03 542.27 L729.54 542.40 L730.03 542.52 L730.51 542.64 L730.97 542.75 L731.41 542.86 L731.84 542.97 L732.26 543.07 L732.66 543.17 L733.05 543.27 L733.43 543.36 L733.79 543.45 L734.15 543.54 L734.50 543.62 L734.83 543.71 L735.16 543.79 L735.48 543.87 L735.79 543.94 L736.09 544.02 L736.38 544.09 L736.66 544.16 L736.94 544.23 L737.21 544.29 L737.47 544.36 L737.73 544.42 L737.98 544.48 L738.23 544.54 L738.46 544.60 L738.70 544.66 L738.92 544.71 L739.15 544.77 L739.36 544.82 L739.57 544.87 L739.78 544.92 L739.98 544.97 L740.18 545.02 L740.38 545.07 L740.56 545.11 L740.75 545.16 L740.93 545.20 L741.11 545.25 L741.28 545.29 L741.45 545.33 L741.62 545.37 L741.78 545.41 L741.95 545.45" fill="none" stroke="#2c2c8c" stroke-width="0.78"/>
</g></svg>
<span class="t" style='left:519.90px;top:318.82px;font-size:6.3px;color:#2c2c2c;'>ML/Mfound</span>
<span class="t" style='left:603.60px;top:318.82px;font-size:6.3px;color:#2c2c2c;letter-spacing:0.155px;'>Scatchard</span>
<span class="t" style='left:629.40px;top:561.72px;font-size:6.3px;color:#2c2c2c;letter-spacing:-1.350px;'>ML</span>
<span class="t" style='left:508.60px;top:553.32px;font-size:6.3px;color:#2c2c2c;letter-spacing:0.160px;'>0.0E+00</span>
<span class="t" style='left:577.50px;top:553.32px;font-size:6.3px;color:#2c2c2c;letter-spacing:0.123px;'>1.0E-08</span>
<span class="t" style='left:645.40px;top:553.32px;font-size:6.3px;color:#2c2c2c;letter-spacing:0.123px;'>2.0E-08</span>
<span class="t" style='left:713.30px;top:553.32px;font-size:6.3px;color:#2c2c2c;letter-spacing:0.123px;'>3.0E-08</span>
<span class="t" style='left:506.23px;top:545.22px;font-size:6.3px;color:#2c2c2c;'>0.0</span>
<span class="t" style='left:506.23px;top:475.62px;font-size:6.3px;color:#2c2c2c;'>5.0</span>
<span class="t" style='left:502.73px;top:406.02px;font-size:6.3px;color:#2c2c2c;'>10.0</span>
<span class="t" style='left:502.73px;top:336.42px;font-size:6.3px;color:#2c2c2c;'>15.0</span>
<div style="left:0.00px;top:577.40px;width:770.00px;height:13.80px;background:#f1f1f1;border-top:1px solid #fafafa"></div>
<div style="left:0.00px;top:591.00px;width:770.00px;height:2.00px;background:linear-gradient(#9a9a9a,#6e6e6e)"></div>
<div style="left:767.60px;top:58.00px;width:2.40px;height:533.00px;background:#e2e2e2"></div>
<span class="t" style='left:335.70px;top:580.22px;font-size:8.6px;color:#222;font-weight:bold;letter-spacing:0.079px;-webkit-text-stroke:0;'>X = 1.02E-7,  Y = 9.91E-8</span>
</div></body></html>
